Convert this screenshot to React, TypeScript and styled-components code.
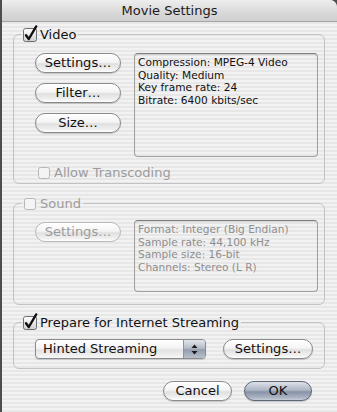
import styled, { createGlobalStyle } from "styled-components";

const GlobalStyle = createGlobalStyle`
  html, body {
    margin: 0;
    padding: 0;
  }
  body {
    background: #4e4e4e;
    font-family: "DejaVu Sans", "Liberation Sans", sans-serif;
    font-size: 13px;
    color: #111;
  }
`;

const Window = styled.div`
  margin-left: 2px;
  height: 412px;
  overflow: hidden;
  background: repeating-linear-gradient(#f2f2f2 0 2px, #e7e7e7 2px 4px);
  border-top-right-radius: 7px;
`;

const TitleBar = styled.div`
  height: 21px;
  border-bottom: 1px solid #a4a4a4;
  background: linear-gradient(#eeeeee, #d9d9d9 60%, #cfcfcf);
  border-top-right-radius: 7px;
  text-align: center;
  font-size: 13px;
  line-height: 22px;
  color: #1a1a1a;
`;

const Body = styled.div`
  padding: 5px 12px 0 11px;
`;

const Group = styled.fieldset<{ $top: number }>`
  margin: ${(p) => p.$top}px 0 0;
  padding: 0;
  border: 1px solid #c2c2c2;
  border-radius: 6px;
  min-width: 0;
`;

const Legend = styled.legend`
  margin-left: 7px;
  padding: 0 2px;
  height: 15px;
  line-height: 15px;
`;

const LabelRow = styled.div<{ $disabled?: boolean }>`
  display: flex;
  align-items: center;
  gap: 3px;
  height: 15px;
  font-size: 13px;
  line-height: 15px;
  color: ${(p) => (p.$disabled ? "#9c9c9c" : "#111")};
`;

const Inner = styled.div<{ $pt: number; $pb: number }>`
  padding: ${(p) => p.$pt}px 6px ${(p) => p.$pb}px 21px;
`;

const Row = styled.div`
  display: flex;
  align-items: flex-start;
  gap: 13px;
`;

const ButtonColumn = styled.div`
  display: flex;
  flex-direction: column;
  gap: 10px;
`;

const Button = styled.button<{ $w: number; $default?: boolean; $mt?: number }>`
  width: ${(p) => p.$w}px;
  height: 20px;
  margin-top: ${(p) => p.$mt ?? 0}px;
  padding: 0;
  box-sizing: border-box;
  border-radius: 10px;
  border: 1px solid ${(p) => (p.$default ? "#5d6577" : "#8a8a8a")};
  background: ${(p) =>
    p.$default
      ? "linear-gradient(#dde2ea 0%, #aeb6c4 45%, #8793a6 55%, #a9b2c2 85%, #c6ccd7 100%)"
      : "linear-gradient(#ffffff 0%, #f4f4f4 45%, #e0e0e0 55%, #f0f0f0 85%, #ffffff 100%)"};
  box-shadow: 0 1px 1px rgba(0, 0, 0, 0.18);
  font-family: inherit;
  font-size: 13px;
  line-height: 18px;
  color: #111;
  text-align: center;

  &:disabled {
    color: #9c9c9c;
    border-color: #b8b8b8;
    box-shadow: none;
  }
`;

const InfoBox = styled.div<{ $h: number; $disabled?: boolean }>`
  width: 184px;
  height: ${(p) => p.$h}px;
  box-sizing: border-box;
  padding: 2px 3px;
  border: 1px solid #a0a0a0;
  border-top-color: #7e7e7e;
  border-radius: 4px;
  box-shadow: inset 0 1px 1px rgba(0, 0, 0, 0.12);
  font-size: 10.6px;
  line-height: 12.5px;
  color: ${(p) => (p.$disabled ? "#8e8e8e" : "#111")};
  white-space: nowrap;
`;

const TranscodeRow = styled.div`
  margin: 8px 0 0 2px;
`;

const Popup = styled.div`
  width: 171px;
  height: 20px;
  box-sizing: border-box;
  display: flex;
  border: 1px solid #8a8a8a;
  border-radius: 4px;
  overflow: hidden;
  background: linear-gradient(#ffffff 0%, #f4f4f4 45%, #e2e2e2 55%, #f6f6f6 100%);
  box-shadow: 0 1px 1px rgba(0, 0, 0, 0.15);
`;

const PopupLabel = styled.span`
  flex: 1;
  padding-left: 7px;
  font-size: 13px;
  line-height: 18px;
`;

const PopupArrows = styled.span`
  width: 21px;
  display: flex;
  align-items: center;
  justify-content: center;
  border-left: 1px solid #8c94a4;
  background: linear-gradient(#e2e6ec 0%, #b6bdc9 45%, #939daf 55%, #b9c0cc 100%);
`;

const StreamRow = styled.div`
  display: flex;
  gap: 17px;
`;

const Footer = styled.div`
  display: flex;
  justify-content: flex-end;
  gap: 12px;
  margin: 12px 13px 0 0;
`;

const CheckSvg = styled.svg`
  display: block;
  flex: none;
  overflow: visible;
`;

function CheckBox({ checked, disabled }: { checked?: boolean; disabled?: boolean }) {
  return (
    <CheckSvg width="14" height="14" viewBox="0 0 14 14">
      <defs>
        <linearGradient id="cbfill" x1="0" y1="0" x2="0" y2="1">
          <stop offset="0" stopColor="#ffffff" />
          <stop offset="1" stopColor="#d0d0d0" />
        </linearGradient>
      </defs>
      <rect
        x={disabled ? 1.5 : 0.5}
        y={disabled ? 1.5 : 0.5}
        width={disabled ? 11 : 13}
        height={disabled ? 11 : 13}
        rx="2"
        fill={disabled ? "#f4f4f4" : "url(#cbfill)"}
        stroke={disabled ? "#b6b6b6" : "#6e6e6e"}
      />
      {checked && (
        <path
          d="M3 7.2 L5.8 11 L13.2 -1.6"
          fill="none"
          stroke="#111"
          strokeWidth="2.4"
          strokeLinecap="round"
          strokeLinejoin="round"
        />
      )}
    </CheckSvg>
  );
}

export default function App() {
  return (
    <>
      <GlobalStyle />
      <Window>
        <TitleBar>Movie Settings</TitleBar>
        <Body>
          <Group $top={0}>
            <Legend>
              <LabelRow>
                <CheckBox checked />
                Video
              </LabelRow>
            </Legend>
            <Inner $pt={11} $pb={3}>
              <Row>
                <ButtonColumn>
                  <Button $w={86}>Settings…</Button>
                  <Button $w={86}>Filter…</Button>
                  <Button $w={86}>Size…</Button>
                </ButtonColumn>
                <InfoBox $h={104}>
                  Compression: MPEG-4 Video
                  <br />
                  Quality: Medium
                  <br />
                  Key frame rate: 24
                  <br />
                  Bitrate: 6400 kbits/sec
                </InfoBox>
              </Row>
              <TranscodeRow>
                <LabelRow $disabled>
                  <CheckBox disabled />
                  Allow Transcoding
                </LabelRow>
              </TranscodeRow>
            </Inner>
          </Group>

          <Group $top={12}>
            <Legend>
              <LabelRow $disabled>
                <CheckBox disabled />
                Sound
              </LabelRow>
            </Legend>
            <Inner $pt={9} $pb={12}>
              <Row>
                <Button $w={86} $mt={2} disabled>
                  Settings…
                </Button>
                <InfoBox $h={72} $disabled>
                  Format: Integer (Big Endian)
                  <br />
                  Sample rate: 44,100 kHz
                  <br />
                  Sample size: 16-bit
                  <br />
                  Channels: Stereo (L R)
                </InfoBox>
              </Row>
            </Inner>
          </Group>

          <Group $top={10}>
            <Legend>
              <LabelRow>
                <CheckBox checked />
                Prepare for Internet Streaming
              </LabelRow>
            </Legend>
            <Inner $pt={9} $pb={9}>
              <StreamRow>
                <Popup>
                  <PopupLabel>Hinted Streaming</PopupLabel>
                  <PopupArrows>
                    <svg width="7" height="11" viewBox="0 0 7 11">
                      <path d="M3.5 0.5 L6.5 4 L0.5 4 Z" fill="#1a1a1a" />
                      <path d="M3.5 10.5 L6.5 7 L0.5 7 Z" fill="#1a1a1a" />
                    </svg>
                  </PopupArrows>
                </Popup>
                <Button $w={90}>Settings…</Button>
              </StreamRow>
            </Inner>
          </Group>

          <Footer>
            <Button $w={69}>Cancel</Button>
            <Button $w={68} $default>
              OK
            </Button>
          </Footer>
        </Body>
      </Window>
    </>
  );
}
